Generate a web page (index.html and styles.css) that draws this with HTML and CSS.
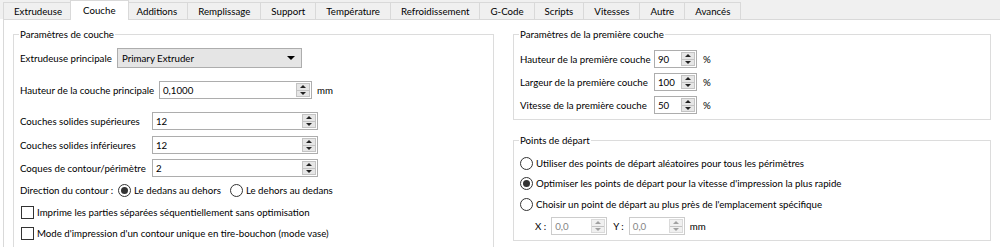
FILE: index.html
```html
<!DOCTYPE html>
<html lang="fr">
<head>
    <meta charset="UTF-8">
    <title>Couche</title>
    <link rel="stylesheet" href="styles.css">
</head>
<body>
    <div class="tabs">
        <div class="tab">Extrudeuse</div>
        <div class="tab active">Couche</div>
        <div class="tab">Additions</div>
        <div class="tab">Remplissage</div>
        <div class="tab">Support</div>
        <div class="tab">Température</div>
        <div class="tab">Refroidissement</div>
        <div class="tab">G-Code</div>
        <div class="tab">Scripts</div>
        <div class="tab">Vitesses</div>
        <div class="tab">Autre</div>
        <div class="tab">Avancés</div>
    </div>

    <div class="pane">
        <fieldset class="group group-layer">
            <legend>Paramètres de couche</legend>

            <div class="row row-extruder">
                <span class="lbl lbl-extruder">Extrudeuse principale</span>
                <div class="combo">Primary Extruder<span class="combo-arrow"></span></div>
            </div>

            <div class="row row-height">
                <span class="lbl lbl-height">Hauteur de la couche principale</span>
                <div class="spin spin-height">
                    <span class="spin-val">0,1000</span>
                    <span class="spin-btns"><i class="up"></i><i class="down"></i></span>
                </div>
                <span class="unit">mm</span>
            </div>

            <div class="row row-top">
                <span class="lbl lbl-solid">Couches solides supérieures</span>
                <div class="spin spin-solid">
                    <span class="spin-val">12</span>
                    <span class="spin-btns"><i class="up"></i><i class="down"></i></span>
                </div>
            </div>

            <div class="row row-bottom">
                <span class="lbl lbl-solid">Couches solides inférieures</span>
                <div class="spin spin-solid">
                    <span class="spin-val">12</span>
                    <span class="spin-btns"><i class="up"></i><i class="down"></i></span>
                </div>
            </div>

            <div class="row row-shells">
                <span class="lbl lbl-solid">Coques de contour/périmètre</span>
                <div class="spin spin-solid">
                    <span class="spin-val">2</span>
                    <span class="spin-btns"><i class="up"></i><i class="down"></i></span>
                </div>
            </div>

            <div class="row row-direction">
                <span class="lbl lbl-direction">Direction du contour :</span>
                <span class="option"><span class="radio checked"></span>Le dedans au dehors</span>
                <span class="option option-second"><span class="radio"></span>Le dehors au dedans</span>
            </div>

            <div class="row row-check1">
                <span class="option option-check"><span class="checkbox"></span>Imprime les parties séparées séquentiellement sans optimisation</span>
            </div>

            <div class="row row-check2">
                <span class="option option-check"><span class="checkbox"></span>Mode d'impression d'un contour unique en tire-bouchon (mode vase)</span>
            </div>
        </fieldset>

        <div class="right-col">
            <fieldset class="group group-first">
                <legend>Paramètres de la première couche</legend>

                <div class="row row-small row-first">
                    <span class="lbl lbl-first">Hauteur de la première couche</span>
                    <div class="spin spin-small">
                        <span class="spin-val">90</span>
                        <span class="spin-btns"><i class="up"></i><i class="down"></i></span>
                    </div>
                    <span class="unit unit-pct">%</span>
                </div>

                <div class="row row-small row-first-next">
                    <span class="lbl lbl-first">Largeur de la première couche</span>
                    <div class="spin spin-small">
                        <span class="spin-val">100</span>
                        <span class="spin-btns"><i class="up"></i><i class="down"></i></span>
                    </div>
                    <span class="unit unit-pct">%</span>
                </div>

                <div class="row row-small row-first-next">
                    <span class="lbl lbl-first">Vitesse de la première couche</span>
                    <div class="spin spin-small">
                        <span class="spin-val">50</span>
                        <span class="spin-btns"><i class="up"></i><i class="down"></i></span>
                    </div>
                    <span class="unit unit-pct">%</span>
                </div>
            </fieldset>

            <fieldset class="group group-start">
                <legend>Points de départ</legend>

                <div class="row row-start">
                    <span class="option"><span class="radio"></span>Utiliser des points de départ aléatoires pour tous les périmètres</span>
                </div>
                <div class="row">
                    <span class="option"><span class="radio checked"></span>Optimiser les points de départ pour la vitesse d'impression la plus rapide</span>
                </div>
                <div class="row row-start-next">
                    <span class="option"><span class="radio"></span>Choisir un point de départ au plus près de l'emplacement spécifique</span>
                </div>

                <div class="row row-xy">
                    <span class="xy-lbl">X :</span>
                    <div class="spin spin-xy disabled">
                        <span class="spin-val">0,0</span>
                        <span class="spin-btns"><i class="up"></i><i class="down"></i></span>
                    </div>
                    <span class="xy-lbl xy-lbl-y">Y :</span>
                    <div class="spin spin-xy disabled">
                        <span class="spin-val">0,0</span>
                        <span class="spin-btns"><i class="up"></i><i class="down"></i></span>
                    </div>
                    <span class="unit">mm</span>
                </div>
            </fieldset>
        </div>
    </div>
</body>
</html>
```

FILE: styles.css
```css
body {
    margin: 0;
    height: 247px;
    overflow: hidden;
    font-family: Lato, "Liberation Sans", sans-serif;
    font-size: 9.7px;
    color: #000;
    background-color: #fff;
}

/* tab strip */

.tabs {
    display: flex;
    align-items: flex-end;
    height: 19px;
    padding-left: 3px;
    background-color: #f0f0f0;
}

.tab {
    height: 17px;
    line-height: 16px;
    padding: 0 10px;
    margin-left: -1px;
    border: 1px solid #d9d9d9;
    border-bottom: none;
    background-color: #f0f0f0;
    box-sizing: border-box;
    white-space: nowrap;
}

.tab:first-child {
    margin-left: 0;
}

.tab.active {
    position: relative;
    z-index: 1;
    height: 20px;
    line-height: 19px;
    margin: 0 -2px -1px -3px;
    padding: 0 12px;
    background-color: #fff;
}

/* page */

.pane {
    display: grid;
    grid-template-columns: 481px 478px;
    column-gap: 19px;
    align-items: start;
    margin-left: 3px;
    padding: 6px 0 0 9px;
    border-top: 1px solid #d9d9d9;
    border-left: 1px solid #d9d9d9;
    height: 221px;
}

.group {
    margin: 0;
    padding: 0 0 0 6px;
    border: 1px solid #dcdcdc;
    min-width: 0;
}

.group legend {
    margin-left: -1px;
    padding: 0 1px;
    line-height: 16px;
}

.group-layer {
    height: 240px;
}

.row {
    display: flex;
    align-items: center;
    height: 20px;
    white-space: nowrap;
}

.lbl {
    flex: none;
}

.unit {
    margin-left: 5px;
}

/* left group rows */

.row-extruder { margin-top: 6px; }
.row-height { margin-top: 12px; }
.row-top { margin-top: 11px; }
.row-bottom { margin-top: 4px; }
.row-shells { margin-top: 3px; }
.row-direction { margin-top: 2px; }
.row-check1 { margin-top: 2px; }
.row-check2 { margin-top: 1px; }

.lbl-extruder { width: 97px; }
.lbl-height { width: 139px; }
.lbl-solid { width: 132px; }
.lbl-direction { width: 98px; }

.combo {
    display: flex;
    align-items: center;
    justify-content: space-between;
    width: 185px;
    height: 20px;
    padding: 0 6px 0 4px;
    box-sizing: border-box;
    border: 1px solid #adadad;
    background-color: #e5e5e5;
}

.combo-arrow {
    border-left: 4px solid transparent;
    border-right: 4px solid transparent;
    border-top: 4px solid #000;
}

/* spin boxes */

.spin {
    display: flex;
    height: 18px;
    box-sizing: border-box;
    border: 1px solid #adadad;
    background-color: #fff;
}

.spin-val {
    flex: 1;
    padding-left: 3px;
    line-height: 16px;
}

.spin-btns {
    display: flex;
    flex-direction: column;
    width: 12px;
    margin: 1px;
    border: 1px solid #c3c3c3;
    background-color: #e6e6e6;
}

.spin-btns i {
    flex: 1;
    display: flex;
    align-items: center;
    justify-content: center;
}

.spin-btns i::after {
    content: "";
    border-left: 3px solid transparent;
    border-right: 3px solid transparent;
}

.spin-btns .up::after {
    border-bottom: 3px solid #222;
}

.spin-btns .down {
    border-top: 1px solid #c3c3c3;
}

.spin-btns .down::after {
    border-top: 3px solid #222;
}

.spin-height { width: 153px; }
.spin-solid { width: 166px; }
.spin-small { width: 43px; }
.spin-xy { width: 56px; }

.spin.disabled {
    border-color: #cccccc;
    color: #838383;
}

.spin.disabled .spin-btns {
    border-color: #dadada;
    background-color: #f0f0f0;
}

.spin.disabled .spin-btns i::after {
    border-bottom-color: #a0a0a0;
    border-top-color: #a0a0a0;
}

/* radios and check boxes */

.option {
    display: inline-flex;
    align-items: center;
}

.radio,
.checkbox {
    display: inline-flex;
    align-items: center;
    justify-content: center;
    width: 13px;
    height: 13px;
    box-sizing: border-box;
    border: 1px solid #333;
    background-color: #fff;
    margin-right: 3px;
}

.radio {
    border-radius: 50%;
}

.radio.checked::after {
    content: "";
    width: 7px;
    height: 7px;
    border-radius: 50%;
    background-color: #333;
}

.option-second {
    margin-left: 9px;
}

.option-check {
    margin-left: 1px;
}

/* right column */

.right-col {
    display: flex;
    flex-direction: column;
    gap: 12px;
}

.group-first {
    padding-bottom: 5px;
}

.row-small { height: 18px; }
.row-first { margin-top: 8px; }
.row-first-next { margin-top: 5px; }

.lbl-first { width: 134px; }

.unit-pct {
    margin-left: 6px;
}

.group-start {
    padding-bottom: 4px;
}

.row-start { margin-top: 5px; }
.row-start-next { margin-top: 1px; }

.row-xy {
    margin-top: 2px;
    padding-left: 15px;
}

.xy-lbl {
    margin-right: 5px;
}

.xy-lbl-y {
    margin-left: 6px;
}
```
